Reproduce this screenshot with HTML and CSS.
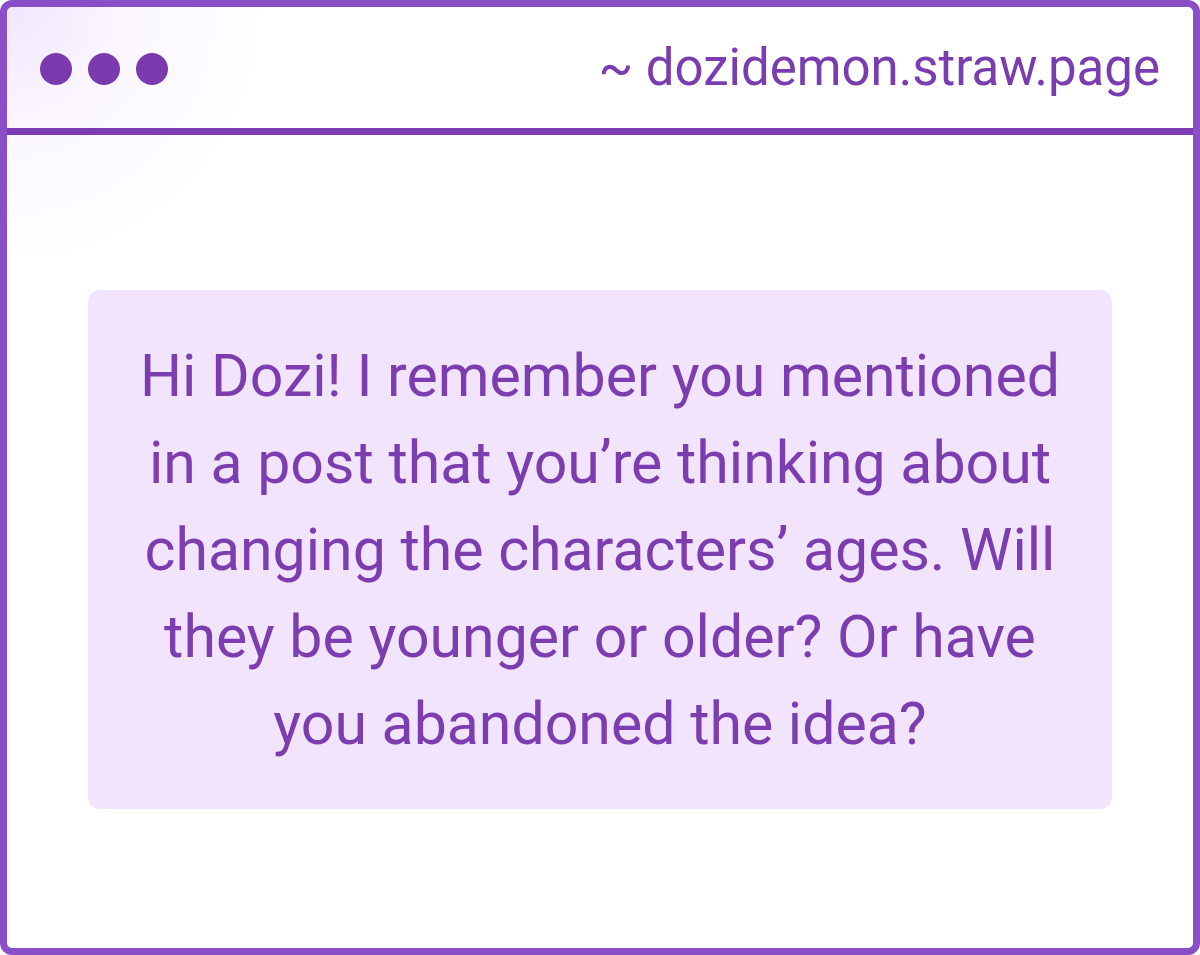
FILE: index.html
```html
<!DOCTYPE html>
<html>
<head>
<meta charset="utf-8">
<link rel="stylesheet" href="styles.css">
</head>
<body>
<div class="window">
  <header class="bar">
    <div class="dots">
      <span class="dot"></span>
      <span class="dot"></span>
      <span class="dot"></span>
    </div>
    <div class="url">~ dozidemon.straw.page</div>
  </header>
  <main class="content">
    <div class="card">
      <p class="question">Hi Dozi! I remember you mentioned in a post that you’re thinking about changing the characters’ ages. Will they be younger or older? Or have you abandoned the idea?</p>
    </div>
  </main>
</div>
</body>
</html>
```
FILE: styles.css
```css
html, body {
  margin: 0;
  padding: 0;
  background: #ffffff;
}
body {
  width: 1200px;
  height: 955px;
  font-family: Roboto, "Liberation Sans", sans-serif;
}
.window {
  box-sizing: border-box;
  width: 1200px;
  height: 955px;
  border: 7px solid #8a4ec6;
  border-radius: 12px;
  display: flex;
  flex-direction: column;
  background:
    radial-gradient(ellipse 260px 260px at 0 0, #f1e6fd 0%, rgba(248,240,255,0.6) 45%, rgba(255,255,255,0) 100%),
    #ffffff;
}
.bar {
  height: 121px;
  border-bottom: 7px solid #7b3db1;
  display: flex;
  align-items: center;
  justify-content: space-between;
  padding: 0 33px 0 33px;
}
.dots {
  display: flex;
  gap: 16px;
  margin-top: 3px;
}
.dot {
  width: 32px;
  height: 32px;
  border-radius: 50%;
  background: #7b3bae;
}
.url {
  color: #7a3db0;
  font-size: 51px;
  line-height: 1;
}
.content {
  flex: 1;
  padding: 155px 81px 0 81px;
}
.card {
  background: #f2e4fd;
  border-radius: 12px;
  height: 519px;
  box-sizing: border-box;
  padding: 42px 30px 0;
}
.question {
  margin: 0;
  color: #7b3db0;
  font-size: 59px;
  line-height: 87px;
  text-align: center;
}
```
